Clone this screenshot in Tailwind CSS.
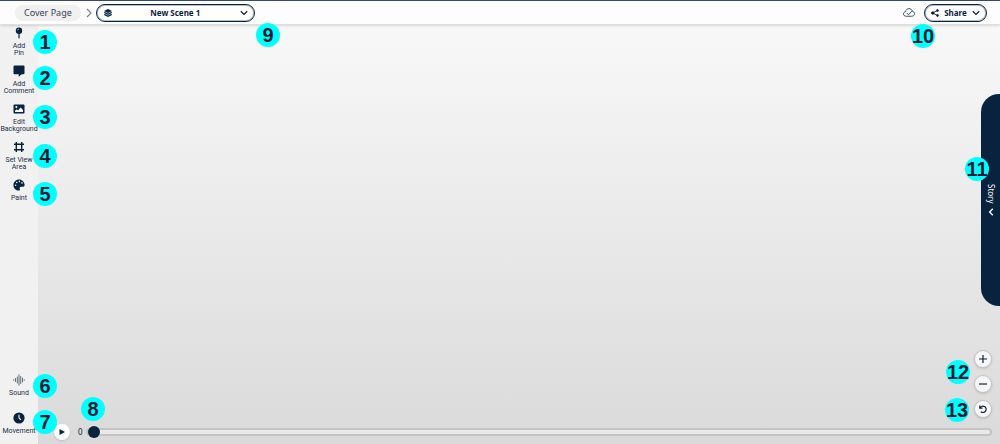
<!DOCTYPE html>
<html lang="en">
<head>
<meta charset="utf-8">
<meta name="viewport" content="width=device-width, initial-scale=1">
<title>New Scene 1</title>
<script src="https://cdn.jsdelivr.net/npm/@tailwindcss/browser@4"></script>
</head>
<body class="relative flex h-screen flex-col overflow-hidden bg-[#f1f1f1] font-['Noto_Sans',sans-serif] text-[#09233f]">
<header class="relative z-10 flex h-[25px] shrink-0 items-center border-t border-b border-t-[#34496b] border-b-[#dedede] bg-[#fdfdfd] pr-[13px] pl-[15px] shadow-sm">
  <a href="#" class="flex h-4 items-center rounded-full bg-[#f0f0f0] px-[9px] text-[9px] text-[#344256]">Cover Page</a>
  <svg class="mr-1 ml-[5px] h-3 w-[6px]" viewBox="0 0 6 12" fill="none" stroke="#7b8592" stroke-width="1.2"><path d="M1 2l4 4-4 4"/></svg>
  <div class="relative flex h-[18px] w-[159px]">
    <select aria-label="Scene" class="h-full w-full appearance-none rounded-full border border-[#09233f] bg-white pr-4 pl-4 text-center text-[8px] leading-4 font-bold text-[#09233f] ring-1 ring-[#09233f]/30 ring-inset [text-align-last:center]"><option>New Scene 1</option></select>
    <svg class="pointer-events-none absolute top-[5px] left-2 size-2" viewBox="0 0 16 16" fill="#09233f"><path d="M8 0l8 4-8 4-8-4z"/><path d="M0 7l2-1 6 3 6-3 2 1v1l-8 4-8-4z"/><path d="M0 11l2-1 6 3 6-3 2 1v1l-8 4-8-4z"/></svg>
    <svg class="pointer-events-none absolute top-[6px] right-[7px] h-[6px] w-2" viewBox="0 0 8 6" fill="none" stroke="#09233f" stroke-width="1.3"><path d="M.8 1.2L4 4.4l3.2-3.2"/></svg>
  </div>
  <svg class="ml-auto h-[9px] w-3" viewBox="0 0 24 18" fill="none" stroke="#26405b" stroke-width="1.8" stroke-linecap="round" stroke-linejoin="round"><path d="M6 16.5C3 16.5 1 14.5 1 12c0-2.4 1.7-4.2 4-4.600C5.4 3.8 8.300 1.300 12 1.300c3.300 0 6 2 6.700 5.200C21.400 7 23 9 23 11.400c0 2.900-2.200 5.100-5 5.100z"/><path d="M8 10.500l3 3L17 7"/></svg>
  <button class="ml-[9px] flex h-[18px] w-[63px] items-center justify-between rounded-full border border-[#09233f] bg-white px-[6px] text-[8px] font-bold ring-1 ring-[#09233f]/30 ring-inset">
    <svg class="h-2 w-2" viewBox="0 0 16 16" fill="#09233f" stroke="#09233f" stroke-width="1.8"><circle cx="3.500" cy="8" r="2.500"/><circle cx="13" cy="3" r="1.800"/><circle cx="13" cy="13" r="1.800"/><path d="M13 3L3.500 8l9.500 5" fill="none"/></svg>
    Share
    <svg class="h-[6px] w-2" viewBox="0 0 8 6" fill="none" stroke="#09233f" stroke-width="1.3"><path d="M.8 1.2L4 4.4l3.200-3.200"/></svg>
  </button>
</header>

<div class="flex min-h-0 flex-1">
  <nav class="flex w-[38px] shrink-0 flex-col bg-[#f1f1f1] pt-[2px] font-['Roboto',sans-serif] text-[7px] leading-[7px] text-[#1b2f47]">
    <button class="flex h-[38px] shrink-0 flex-col items-center gap-1">
      <svg class="size-3 shrink-0" viewBox="0 0 12 12" fill="#09233f"><circle cx="6" cy="3.700" r="3.200"/><path d="M5.400 6h1.200v5l-.6.8-.6-.8z"/><path d="M4.500 3.400c0-.8.600-1.300 1.400-1.400" fill="none" stroke="#fff" stroke-width=".6"/></svg>
      <span>Add<br>Pin</span>
    </button>
    <button class="flex h-[38px] shrink-0 flex-col items-center gap-1">
      <svg class="size-3 shrink-0" viewBox="0 0 12 12" fill="#09233f"><path d="M1.500.5h9a1 1 0 0 1 1 1V8.200a1 1 0 0 1-1 1H8.700L5.700 11.800V9.200H1.500a1 1 0 0 1-1-1V1.500a1 1 0 0 1 1-1z"/></svg>
      <span>Add<br>Comment</span>
    </button>
    <button class="flex h-[38px] shrink-0 flex-col items-center gap-1">
      <svg class="size-3 shrink-0" viewBox="0 0 12 12" fill="#09233f"><rect x=".5" y="1.500" width="11" height="9" rx="1"/><circle cx="3.300" cy="4" r="1" fill="#fff"/><path d="M2 9V7.800l1.700-1.600L5 7.400l2.600-2.900L10 7v2z" fill="#fff"/></svg>
      <span>Edit<br>Background</span>
    </button>
    <button class="flex h-[38px] shrink-0 flex-col items-center gap-1">
      <svg class="size-3 shrink-0" viewBox="0 0 12 12" fill="none" stroke="#09233f" stroke-width="1.400"><path d="M3.300 1v10M8.700 1v10M1 3.300h10M1 8.700h10"/></svg>
      <span class="whitespace-nowrap">Set View<br>Area</span>
    </button>
    <button class="flex h-[38px] shrink-0 flex-col items-center gap-1">
      <svg class="size-3 shrink-0" viewBox="0 0 12 12" fill="#09233f"><path d="M6 .4C2.900.4.4 2.900.4 6s2.500 5.600 5.400 5.600c1 0 1.400-.8 1-1.600-.6-1.200.1-2.300 1.300-2.300h2c.9 0 1.500-.7 1.500-1.600C11.600 2.900 9.100.4 6 .4z"/><g fill="#f1f1f1"><circle cx="2.600" cy="6.200" r=".8"/><circle cx="3.700" cy="3.500" r=".8"/><circle cx="6.400" cy="2.400" r=".8"/><circle cx="9" cy="3.900" r=".8"/></g></svg>
      <span>Paint</span>
    </button>
    <button class="mt-auto flex h-[38px] shrink-0 flex-col items-center gap-1">
      <svg class="size-3 shrink-0" viewBox="0 0 12 12" fill="none" stroke="#3b4d61" stroke-width=".8" stroke-linecap="round"><path d="M.8 5.700v.6M2.500 4.500v3M4.300 3v6M6 .8v10.400M7.700 2.500v7M9.500 4v4M11.200 5.700v.6"/></svg>
      <span>Sound</span>
    </button>
    <button class="flex h-8 shrink-0 flex-col items-center gap-1">
      <svg class="size-3 shrink-0" viewBox="0 0 12 12"><circle cx="6" cy="6" r="5.600" fill="#09233f"/><path d="M6 2.800V6l2 1.800" fill="none" stroke="#fff" stroke-width="1.100"/></svg>
      <span>Movement</span>
    </button>
  </nav>

  <main class="flex min-w-0 flex-1 flex-col bg-linear-to-b from-[#f8f8f8] to-[#dadada]">
    <div class="flex min-h-0 flex-1 flex-col items-end justify-between">
      <button class="mt-[69px] flex h-[212px] w-[19px] items-center justify-center gap-1 rounded-l-[18px] bg-[#09233f] text-[8px] text-white [writing-mode:vertical-rl]">
        Story
        <svg class="h-2 w-[6px]" viewBox="0 0 6 8" fill="none" stroke="#fff" stroke-width="1.300"><path d="M4.800.8L1.600 4l3.200 3.200"/></svg>
      </button>
      <div class="mr-2 mb-[2px] flex flex-col gap-[7px]">
        <button aria-label="Zoom in" class="flex size-[18px] items-center justify-center rounded-full border border-[#c4c4c4] bg-[#f7f7f7] shadow-sm"><svg class="size-2" viewBox="0 0 8 8" stroke="#09233f" stroke-width="1.200"><path d="M4 0v8M0 4h8"/></svg></button>
        <button aria-label="Zoom out" class="flex size-[18px] items-center justify-center rounded-full border border-[#c4c4c4] bg-[#f7f7f7] shadow-sm"><svg class="size-2" viewBox="0 0 8 8" stroke="#09233f" stroke-width="1.200"><path d="M0 4h8"/></svg></button>
        <button aria-label="Reset view" class="flex size-[18px] items-center justify-center rounded-full border border-[#c4c4c4] bg-[#f7f7f7] shadow-sm"><svg class="size-2" viewBox="0 0 8 8" fill="none" stroke="#09233f" stroke-width="1.200"><path d="M.8.4v2.700h2.700M1 3A3.200 3.200 0 1 1 1.800 6.700"/></svg></button>
      </div>
    </div>
    <div class="flex h-6 shrink-0 items-center pr-2 pl-4">
      <button aria-label="Play" class="flex size-4 shrink-0 items-center justify-center rounded-full bg-white shadow-sm"><svg class="h-[6px] w-[6px]" viewBox="0 0 6 6" fill="#09233f"><path d="M.5 0L6 3 .5 6z"/></svg></button>
      <label for="time" class="w-4 shrink-0 pl-2 text-[8px]">0</label>
      <input id="time" type="range" min="0" max="100" value="0" class="h-3 min-w-0 flex-1 appearance-none bg-transparent [&::-webkit-slider-runnable-track]:h-2 [&::-webkit-slider-runnable-track]:rounded-full [&::-webkit-slider-runnable-track]:border-2 [&::-webkit-slider-runnable-track]:border-[#c4c4c4] [&::-webkit-slider-runnable-track]:bg-[#e9e9e9] [&::-webkit-slider-thumb]:-mt-1 [&::-webkit-slider-thumb]:size-3 [&::-webkit-slider-thumb]:appearance-none [&::-webkit-slider-thumb]:rounded-full [&::-webkit-slider-thumb]:bg-[#09233f]">
    </div>
  </main>
</div>

<!-- Numbered callouts -->
<div class="pointer-events-none absolute inset-0 z-20 font-['Liberation_Sans',sans-serif] text-[20px] leading-6 font-bold text-[#061a33] *:absolute *:flex *:size-6 *:items-center *:justify-center *:rounded-full *:bg-[#00ffff]">
  <span class="top-[30px] left-[33px]">1</span>
  <span class="top-[66px] left-[33px]">2</span>
  <span class="top-[105px] left-[33px]">3</span>
  <span class="top-[144px] left-[33px]">4</span>
  <span class="top-[182px] left-[33px]">5</span>
  <span class="bottom-[46px] left-[33px]">6</span>
  <span class="bottom-[10px] left-[33px]">7</span>
  <span class="bottom-[23px] left-[81px]">8</span>
  <span class="top-[23px] left-[256px]">9</span>
  <span class="top-[24px] right-[65px]">10</span>
  <span class="top-[157px] right-[11px]">11</span>
  <span class="right-[30px] bottom-[60px]">12</span>
  <span class="right-[31px] bottom-[22px]">13</span>
</div>
</body>
</html>
